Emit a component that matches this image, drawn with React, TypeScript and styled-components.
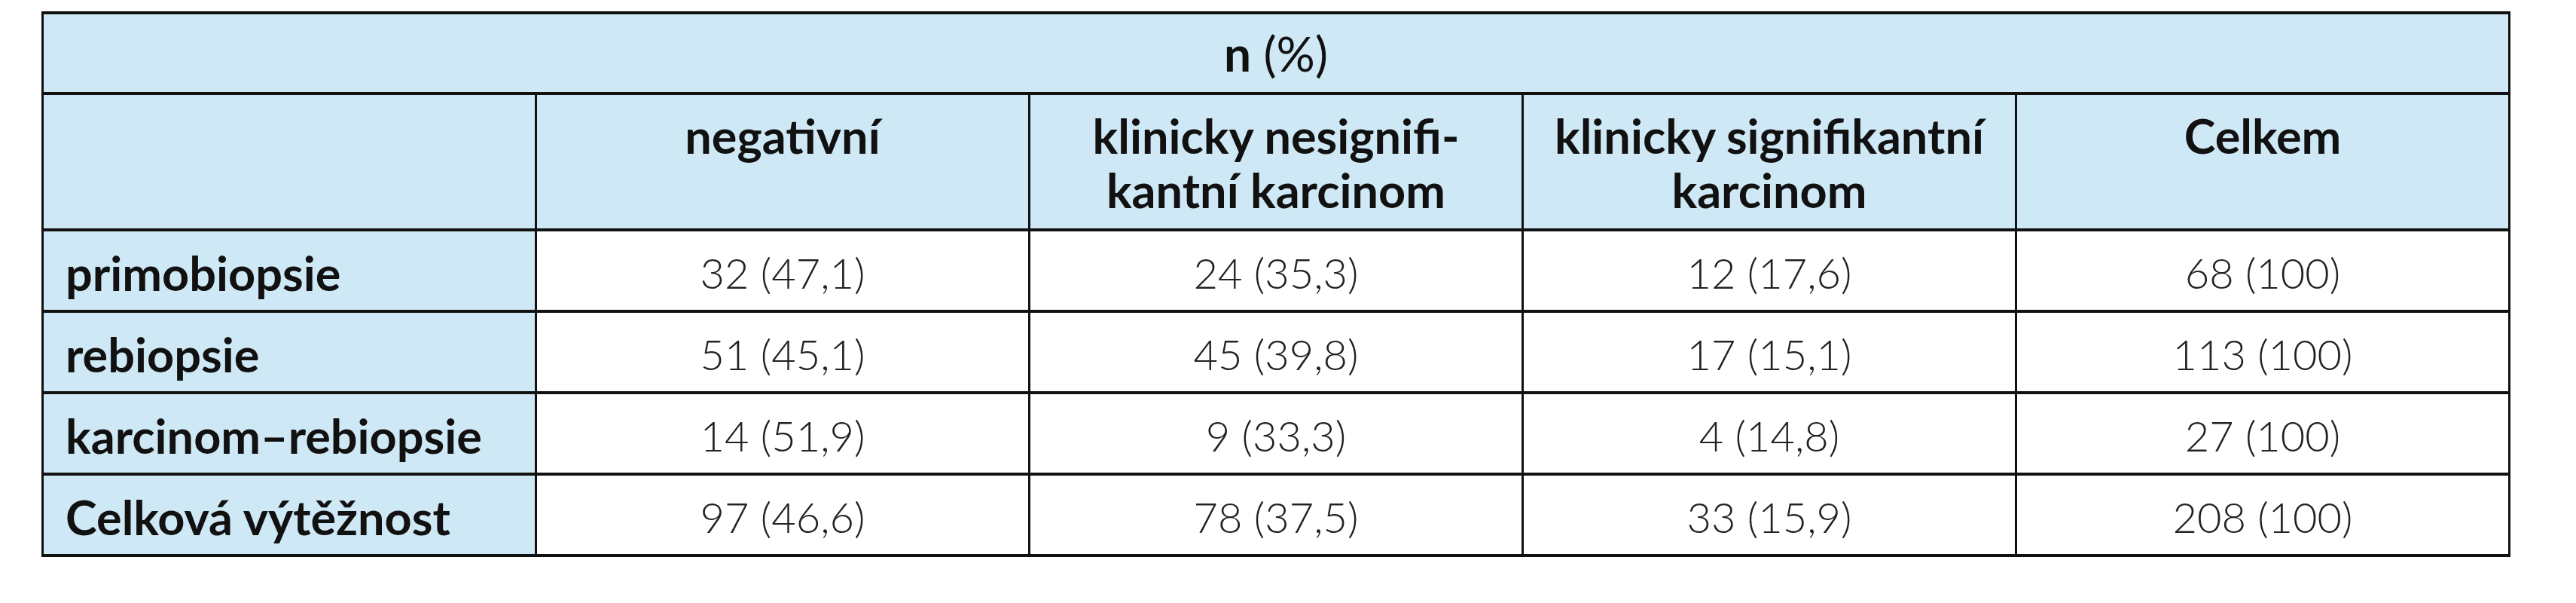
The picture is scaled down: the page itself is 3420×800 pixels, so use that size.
import React from "react";
import styled, { createGlobalStyle } from "styled-components";

const GlobalStyle = createGlobalStyle`
  html, body {
    margin: 0;
    padding: 0;
    background: #ffffff;
  }
`;

const Page = styled.div`
  padding: 15px 0 0 55px;
  font-family: "Lato", "Open Sans", sans-serif;
  color: #111;
`;

const Table = styled.table`
  width: 3275px;
  table-layout: fixed;
  border-collapse: collapse;
  border-style: solid;
  border-color: #111;
  border-width: 4px 3px;
`;

const Row = styled.tr<{ $h: number }>`
  height: ${(p) => p.$h}px;
`;

const Cell = styled.th`
  border-style: solid;
  border-color: #111;
  border-width: 4px 3px;
  padding: 0;
  line-height: 72px;
`;

const GroupHead = styled(Cell)`
  background: #cfe8f5;
  font-size: 64px;
  font-weight: 400;
  text-align: center;
  vertical-align: middle;

  b {
    font-weight: 700;
  }
`;

const ColHead = styled(Cell)`
  background: #cfe8f5;
  font-size: 63px;
  font-weight: 700;
  text-align: center;
  vertical-align: top;
  padding-top: 18px;
  white-space: nowrap;
`;

const RowLabel = styled(Cell)`
  background: #cfe8f5;
  font-size: 63px;
  font-weight: 700;
  text-align: left;
  vertical-align: middle;
  padding: 6px 0 0 29px;
  white-space: nowrap;
`;

const Value = styled(Cell).attrs({ as: "td" })`
  background: #ffffff;
  font-size: 56px;
  font-weight: 300;
  color: #222;
  text-align: center;
  vertical-align: middle;
  padding-top: 6px;
`;

const rows = [
  { label: "primobiopsie", values: ["32 (47,1)", "24 (35,3)", "12 (17,6)", "68 (100)"] },
  { label: "rebiopsie", values: ["51 (45,1)", "45 (39,8)", "17 (15,1)", "113 (100)"] },
  { label: "karcinom–rebiopsie", values: ["14 (51,9)", "9 (33,3)", "4 (14,8)", "27 (100)"] },
  { label: "Celková výtěžnost", values: ["97 (46,6)", "78 (37,5)", "33 (15,9)", "208 (100)"] },
];

export default function App() {
  return (
    <>
      <GlobalStyle />
      <Page>
        <Table>
          <colgroup>
            <col style={{ width: 655 }} />
            <col style={{ width: 655 }} />
            <col style={{ width: 655 }} />
            <col style={{ width: 655 }} />
            <col style={{ width: 655 }} />
          </colgroup>
          <thead>
            <Row $h={107}>
              <GroupHead colSpan={5}>
                <b>n</b> (%)
              </GroupHead>
            </Row>
            <Row $h={181}>
              <ColHead />
              <ColHead>negativní</ColHead>
              <ColHead>
                klinicky nesignifi-
                <br />
                kantní karcinom
              </ColHead>
              <ColHead>
                klinicky signifikantní
                <br />
                karcinom
              </ColHead>
              <ColHead>Celkem</ColHead>
            </Row>
          </thead>
          <tbody>
            {rows.map((r) => (
              <Row $h={108} key={r.label}>
                <RowLabel>{r.label}</RowLabel>
                {r.values.map((v, i) => (
                  <Value key={i}>{v}</Value>
                ))}
              </Row>
            ))}
          </tbody>
        </Table>
      </Page>
    </>
  );
}
